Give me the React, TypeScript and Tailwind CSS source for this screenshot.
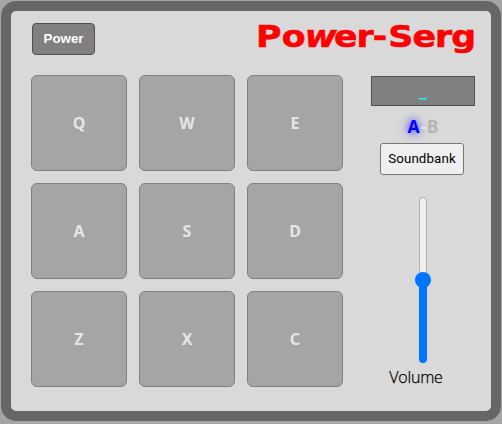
const pads = ['Q', 'W', 'E', 'A', 'S', 'D', 'Z', 'X', 'C'];

function Header() {
  return (
    <header className="flex h-[64px] items-start justify-between pl-[21px] pr-4">
      <button className="mt-3 h-8 w-[63px] rounded-[4px] border border-[#505050] bg-[#808080] font-['Liberation_Sans',sans-serif] text-[13.33px] leading-none font-bold text-white">
        Power
      </button>
      <h1 className="mt-[7px] w-[195px] origin-top-left scale-x-[1.12] -translate-x-6 font-['DejaVu_Sans',sans-serif] text-[31px] leading-9 font-bold tracking-[-0.8px] whitespace-nowrap text-[#ff0000] [-webkit-text-stroke:0.6px_#ff0000]">
        <span className="tracking-[0.3px]">P</span>o<span className="tracking-[-2.6px] italic">w</span>er
        <span className="tracking-[1px]">-</span>Serg
      </h1>
    </header>
  );
}

function VolumeSlider() {
  return (
    <div className="mt-[22px] flex h-[166px] w-4 flex-col items-center" role="slider" aria-label="Volume" aria-valuenow={50}>
      <div className="-mb-2 h-[83px] w-2 rounded-t-full border border-b-0 border-[#b2b2b2] bg-[#efefef]" />
      <div className="z-10 h-4 w-4 shrink-0 rounded-full bg-[#0075ff]" />
      <div className="-mt-2 h-[83px] w-2 rounded-b-full bg-[#0075ff]" />
    </div>
  );
}

function Controls() {
  return (
    <aside className="flex w-[104px] flex-col items-center pt-px">
      <div className="flex h-[30px] w-full items-center justify-center border border-[#505050] bg-[#808080] pb-px text-base text-[#00ffff]">
        <span className="leading-none [-webkit-text-stroke:0.3px_#00ffff]">_</span>
      </div>
      <div className="mt-2 flex h-6 w-full items-center justify-center text-[17.5px] leading-6 font-bold text-[#b5b5b5]">
        <span className="text-[#0000ff] [text-shadow:0_0_10px_#0000ff]">A</span>
        <span className="w-[7px] text-center text-[#e5e5e5]">-</span>
        <span>B</span>
      </div>
      <button className="mt-[5px] h-8 w-[84px] -translate-x-px rounded-[3px] border border-[#767676] bg-[#efefef] font-['Roboto',sans-serif] text-[13.33px] leading-none tracking-[0.1px] whitespace-nowrap text-black">
        Soundbank
      </button>
      <VolumeSlider />
      <span className="mt-[2px] mr-[14px] font-['Open_Sans',sans-serif] text-base leading-6 font-light tracking-[-0.2px] text-black [-webkit-text-stroke:0.25px_black]">Volume</span>
    </aside>
  );
}

export default function App() {
  return (
    <div className="h-[424px] w-[502px] bg-[#a5a5a5] p-px font-['Noto_Sans',sans-serif]">
      <main className="h-[420px] w-[500px] rounded-[15px] border-[10px] border-[#666666] bg-[#d9d9d9]">
        <Header />
        <div className="flex items-start gap-7 pl-5">
          <div className="grid grid-cols-[repeat(3,96px)] gap-3">
            {pads.map((pad) => (
              <button key={pad} className="flex h-24 w-24 items-center justify-center rounded-md border border-[#808080] bg-[#a5a5a5] text-base leading-6 font-bold text-[#e5e5e5]">
                {pad}
              </button>
            ))}
          </div>
          <Controls />
        </div>
      </main>
    </div>
  );
}
